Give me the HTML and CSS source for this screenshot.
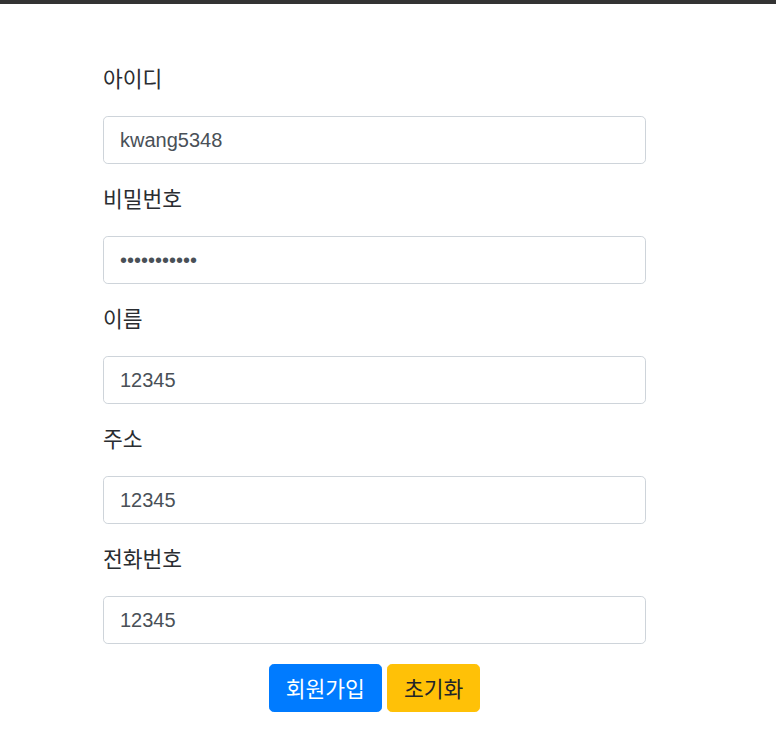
FILE: index.html
```html
<!DOCTYPE html>
<html lang="ko">
<head>
<meta charset="utf-8">
<title>회원가입</title>
<link rel="stylesheet" href="styles.css">
</head>
<body>
<div class="topbar"></div>
<main class="page">
  <form class="join-form">
    <div class="field">
      <label class="field-label" for="uid">아이디</label>
      <input class="field-input" id="uid" type="text" value="kwang5348">
    </div>
    <div class="field">
      <label class="field-label" for="upw">비밀번호</label>
      <input class="field-input" id="upw" type="password" value="12345678901">
    </div>
    <div class="field">
      <label class="field-label" for="uname">이름</label>
      <input class="field-input" id="uname" type="text" value="12345">
    </div>
    <div class="field">
      <label class="field-label" for="uaddr">주소</label>
      <input class="field-input" id="uaddr" type="text" value="12345">
    </div>
    <div class="field">
      <label class="field-label" for="utel">전화번호</label>
      <input class="field-input" id="utel" type="text" value="12345">
    </div>
    <div class="actions">
      <button type="submit" class="btn btn-primary">회원가입</button>
      <button type="reset" class="btn btn-warning">초기화</button>
    </div>
  </form>
</main>
</body>
</html>
```
FILE: styles.css
```css
html, body {
  margin: 0;
  padding: 0;
  background: #fff;
}
body {
  font-family: "Liberation Sans", "Noto Sans CJK KR", Arial, sans-serif;
  color: #212529;
}
.topbar {
  height: 4px;
  background: #333333;
}
.page {
  padding: 40px 0 0 103px;
}
.join-form {
  width: 543px;
}
.field-label {
  display: block;
  font-family: "Noto Sans CJK KR", "Liberation Sans", sans-serif;
  font-size: 21.5px;
  line-height: 30px;
  margin: 19px 0 23px;
  color: #2a2d31;
}
.field-input {
  display: block;
  box-sizing: border-box;
  width: 100%;
  height: 48px;
  padding: 8px 16px;
  font-family: "Liberation Sans", "Noto Sans CJK KR", sans-serif;
  font-size: 20px;
  line-height: 30px;
  color: #495057;
  background: #fff;
  border: 1px solid #ced4da;
  border-radius: 4.8px;
  outline: none;
}
.actions {
  display: flex;
  justify-content: center;
  gap: 5px;
  margin-top: 20px;
}
.btn {
  box-sizing: border-box;
  height: 48px;
  padding: 8px 16px;
  font-family: "Noto Sans CJK KR", "Liberation Sans", sans-serif;
  font-size: 21.5px;
  line-height: 30px;
  border: 1px solid transparent;
  border-radius: 4.8px;
  cursor: pointer;
}
.btn-primary {
  background: #007bff;
  border-color: #007bff;
  color: #fff;
}
.btn-warning {
  background: #ffc107;
  border-color: #ffc107;
  color: #212529;
}
```
